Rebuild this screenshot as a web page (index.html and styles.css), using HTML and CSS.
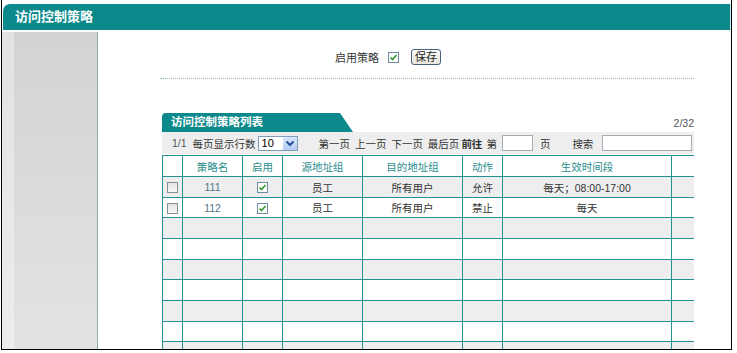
FILE: index.html
```html
<!DOCTYPE html>
<html lang="zh-CN">
  <head>
    <meta charset="utf-8">
    <link rel="stylesheet" href="styles.css">
  </head>
  <body>
    <div class="frame">
      <div class="titlebar">访问控制策略</div>
      <div class="page">
        <div class="sidebar"></div>
        <div class="main">
          <div class="enable-row">
            <span>启用策略</span>
            <span class="cb checked"><svg viewBox="0 0 11 11" width="11" height="11"><path d="M2.5 5.5 L4.5 7.5 L8.5 3" fill="none" stroke="#2f9a2f" stroke-width="1.6"/></svg></span>
            <button class="btn">保存</button>
          </div>
          <div class="divider"></div>
          <div class="list">
            <div class="list-head">
              <div class="tab">访问控制策略列表</div>
              <div class="count">2/32</div>
            </div>
            <div class="toolbar">
              <span class="pages">1/1</span>
              <span>每页显示行数</span>
              <span class="select"><span class="select-val">10</span><span class="select-btn"><svg viewBox="0 0 14 13" width="14" height="13"><path d="M3.5 4.5 L7 8 L10.5 4.5" fill="none" stroke="#2a4f9a" stroke-width="2"/></svg></span></span>
              <span class="nav">第一页 上一页 下一页 最后页</span>
              <span class="goto">前往</span>
              <span class="di">第</span>
              <span class="box page-input"></span>
              <span class="pg">页</span>
              <span class="search-label">搜索</span>
              <span class="box search-input"></span>
            </div>
            <table class="grid">
              <colgroup>
                <col style="width: 20px">
                <col style="width: 60px">
                <col style="width: 40px">
                <col style="width: 80px">
                <col style="width: 100px">
                <col style="width: 40px">
                <col style="width: 169px">
                <col style="width: 22px">
              </colgroup>
              <thead>
                <tr>
                  <th></th>
                  <th>策略名</th>
                  <th>启用</th>
                  <th>源地址组</th>
                  <th>目的地址组</th>
                  <th>动作</th>
                  <th>生效时间段</th>
                  <th class="last"></th>
                </tr>
              </thead>
              <tbody>
                <tr>
                  <td><span class="cb"></span></td>
                  <td class="name">111</td>
                  <td><span class="cb checked"><svg viewBox="0 0 11 11" width="11" height="11"><path d="M2.5 5.5 L4.5 7.5 L8.5 3" fill="none" stroke="#2f9a2f" stroke-width="1.6"/></svg></span></td>
                  <td>员工</td>
                  <td>所有用户</td>
                  <td>允许</td>
                  <td>每天；08:00-17:00</td>
                  <td class="last"></td>
                </tr>
                <tr>
                  <td><span class="cb"></span></td>
                  <td class="name">112</td>
                  <td><span class="cb checked"><svg viewBox="0 0 11 11" width="11" height="11"><path d="M2.5 5.5 L4.5 7.5 L8.5 3" fill="none" stroke="#2f9a2f" stroke-width="1.6"/></svg></span></td>
                  <td>员工</td>
                  <td>所有用户</td>
                  <td>禁止</td>
                  <td>每天</td>
                  <td class="last"></td>
                </tr>
                <tr><td></td><td></td><td></td><td></td><td></td><td></td><td></td><td class="last"></td></tr>
                <tr><td></td><td></td><td></td><td></td><td></td><td></td><td></td><td class="last"></td></tr>
                <tr><td></td><td></td><td></td><td></td><td></td><td></td><td></td><td class="last"></td></tr>
                <tr><td></td><td></td><td></td><td></td><td></td><td></td><td></td><td class="last"></td></tr>
                <tr><td></td><td></td><td></td><td></td><td></td><td></td><td></td><td class="last"></td></tr>
                <tr><td></td><td></td><td></td><td></td><td></td><td></td><td></td><td class="last"></td></tr>
                <tr><td></td><td></td><td></td><td></td><td></td><td></td><td></td><td class="last"></td></tr>
                <tr><td></td><td></td><td></td><td></td><td></td><td></td><td></td><td class="last"></td></tr>
              </tbody>
            </table>
          </div>
        </div>
      </div>
    </div>
  </body>
</html>
```

FILE: styles.css
```css
body {
  margin: 0;
  background: #fff;
  font-family: "Liberation Sans", "Noto Sans CJK SC", sans-serif;
  font-size: 10.5px;
  color: #333;
}

.frame {
  margin-left: 1px;
  width: 729px;
  height: 349px;
  border: 1px solid #000;
  border-top: none;
  overflow: hidden;
}

.titlebar {
  margin: 4px 1px 0;
  height: 26px;
  line-height: 26px;
  padding-left: 12px;
  background: #0b898b;
  border-top-left-radius: 7px;
  box-shadow: 1px 0 0 #c9eeee;
  color: #fff;
  font-size: 13px;
  font-weight: bold;
}

.page {
  display: flex;
  margin-top: 2px;
  height: 317px;
}

.sidebar {
  width: 95px;
  border-right: 1px solid #86b0b0;
  background:
    linear-gradient(to right, rgba(255,255,255,0.35) 0, rgba(255,255,255,0.35) 12px, transparent 12px),
    linear-gradient(to bottom, #d3d3d3, #e3e3e3);
}

.main {
  flex: 1;
  padding: 0 37px 0 62px;
}

.enable-row {
  display: flex;
  align-items: center;
  margin-top: 17px;
  padding-left: 175px;
  height: 16px;
  font-size: 11px;
}

.cb {
  display: inline-block;
  box-sizing: border-box;
  width: 11px;
  height: 11px;
  border: 1px solid #8a8f94;
  background: linear-gradient(#e4e4e4, #f8f8f8);
  vertical-align: middle;
}
.cb svg {
  display: block;
  margin: -1px;
}
.cb.checked {
  border-color: #6f8aa3;
  background: #fdfdfd;
}
.enable-row .cb {
  margin-left: 9px;
}

.btn {
  margin-left: 12px;
  height: 16px;
  width: 30px;
  padding: 0;
  border: 1px solid #4b5e7e;
  border-radius: 3px;
  background: linear-gradient(#fbfbf8, #e6e4dc);
  font-family: inherit;
  font-size: 11px;
  line-height: 13px;
  color: #222;
}

.divider {
  margin-top: 13px;
  border-top: 1px dotted #9ab7c0;
}

.list {
  margin: 34px 0 0 2px;
}

.list-head {
  display: flex;
  justify-content: space-between;
  align-items: flex-end;
}

.tab {
  width: 182px;
  height: 19px;
  line-height: 19px;
  padding-left: 9px;
  background: #0b898b;
  border-top-left-radius: 4px;
  clip-path: polygon(0 0, calc(100% - 13px) 0, 100% 100%, 0 100%);
  color: #fff;
  font-weight: bold;
  font-size: 11.5px;
}

.count {
  padding-bottom: 3px;
  color: #555;
}

.toolbar {
  display: flex;
  align-items: center;
  height: 22px;
  padding-left: 10px;
  background: #eeeeee;
  color: #333;
  white-space: nowrap;
}
.toolbar > span {
  flex-shrink: 0;
}
.toolbar .pages {
  margin-right: 6px;
  color: #555;
}
.select {
  display: flex;
  margin-left: 2px;
  width: 40px;
  height: 15px;
  box-sizing: border-box;
  border: 1px solid #7f9db9;
  background: #fff;
}
.select-val {
  flex: 1;
  padding-left: 3px;
  line-height: 13px;
  font-size: 11px;
  color: #000;
}
.select-btn {
  width: 14px;
  height: 13px;
  background: linear-gradient(#dbe6fb, #b6cbf3);
}
.select-btn svg {
  display: block;
}
.nav {
  margin-left: 21px;
  word-spacing: 2px;
}
.goto {
  margin-left: 2px;
  font-weight: bold;
}
.di {
  margin-left: 4px;
}
.box {
  display: inline-block;
  box-sizing: border-box;
  height: 16px;
  border: 1px solid #a5acb5;
  background: #fff;
}
.page-input {
  width: 31px;
  margin-left: 5px;
}
.pg {
  margin-left: 7px;
}
.search-label {
  margin-left: 22px;
}
.search-input {
  width: 90px;
  margin-left: 9px;
}

.grid {
  table-layout: fixed;
  border-collapse: collapse;
  width: 531px;
  margin-top: 1px;
}
.grid th,
.grid td {
  height: 20px;
  padding: 0;
  border: 1px solid #249292;
  text-align: center;
  font-weight: normal;
}
.grid tbody tr:nth-child(3n+2) td {
  height: 19px;
}
.grid th {
  color: #2a8d8d;
}
.grid .last {
  border-right: none;
}
.grid tbody tr:nth-child(odd) {
  background: #eeeeee;
}
.grid .name {
  color: #4f7686;
}
```
